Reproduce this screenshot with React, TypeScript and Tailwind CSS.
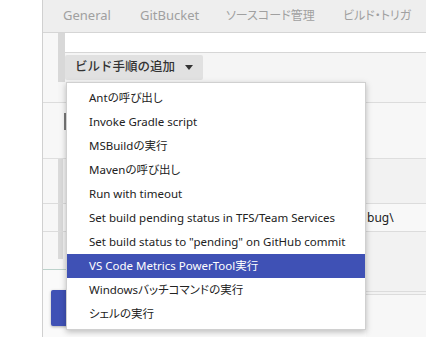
const menuItems = [
  "Antの呼び出し",
  "Invoke Gradle script",
  "MSBuildの実行",
  "Mavenの呼び出し",
  "Run with timeout",
  "Set build pending status in TFS/Team Services",
  'Set build status to "pending" on GitHub commit',
  "VS Code Metrics PowerTool実行",
  "Windowsバッチコマンドの実行",
  "シェルの実行",
];

const activeIndex = 7;

export default function App() {
  return (
    <div
      className="relative flex w-[426px] h-[337px] overflow-hidden bg-white"
      style={{ fontFamily: '"Noto Sans", "Noto Sans CJK JP", sans-serif' }}
    >
      <div className="w-[43px] shrink-0 bg-white border-r border-[#d0d0d0]" />

      <div className="flex flex-col flex-1 min-w-0">
        {/* tabs */}
        <div className="flex items-center h-[33px] shrink-0 pl-[20px] bg-[#eeeeee] border-b border-[#d5d5d5] text-[13px] text-[#a0a0a0] whitespace-nowrap [font-feature-settings:'palt']">
          <span className="w-[77px]">General</span>
          <span className="w-[86px]">GitBucket</span>
          <span className="w-[117px] text-[12px]">ソースコード管理</span>
          <span className="text-[12px]">ビルド・トリガ</span>
        </div>

        <div className="flex h-[20px] shrink-0">
          <div className="w-[15px] bg-[#f7f7f7]" />
          <div className="w-[7px] bg-[#d8d8d8]" />
          <div className="flex-1 bg-white border-b border-[#d6d6d6]" />
        </div>

        <div className="flex h-[50px] shrink-0 border-b border-[#dcdcdc]">
          <div className="w-[15px] bg-[#f7f7f7]" />
          <div className="w-[7px] bg-[#f5f5f5]">
            <div className="h-[29px] bg-[#d8d8d8]" />
          </div>
          <div className="flex-1 bg-[#f5f5f5] pt-[2px]">
            <button className="flex items-center gap-[10px] h-[25px] pl-[10px] pr-[10px] rounded-[2px] bg-[#e1e1e1] text-[12.5px] font-medium text-[#333333]">
              ビルド手順の追加
              <svg width="8" height="5" viewBox="0 0 8 5">
                <path d="M0 0h8L4 5z" fill="#333333" />
              </svg>
            </button>
          </div>
        </div>

        <div className="flex h-[56px] shrink-0 bg-[#f7f7f7] border-b border-[#dedede]">
          <div className="w-[21px]" />
          <div className="mt-[10px] w-[2px] h-[17px] bg-[#7a7a7a]" />
        </div>

        <div className="flex h-[45px] shrink-0 border-b border-[#dcdcdc]">
          <div className="w-[15px] bg-[#f7f7f7]" />
          <div className="w-[5px] bg-[#dadada]" />
          <div className="flex-1 bg-[#f2f2f2]" />
        </div>

        <div className="flex h-[28px] shrink-0 border-b border-[#dcdcdc]">
          <div className="w-[15px] bg-[#f7f7f7]" />
          <div className="w-[5px] bg-[#dadada]" />
          <div className="w-[304px] bg-[#f8f8f8]" />
          <div className="flex flex-1 items-center bg-[#f8f8f8] text-[12px] text-[#222222]">
            <span>bug\</span>
          </div>
        </div>

        <div className="flex h-[37px] shrink-0">
          <div className="w-[15px] bg-[#f7f7f7]" />
          <div className="w-[5px] bg-[#f7f7f7]">
            <div className="h-[27px] bg-[#dadada]" />
          </div>
          <div className="flex-1 bg-[#f2f2f2]" />
        </div>

        {/* footer */}
        <div className="flex flex-1">
          <div className="w-[323px] border-t border-[#bcd2cb] bg-[#fafafa] pl-[8px] pt-[20px]">
            <button className="w-[80px] h-[36px] rounded-[2px] bg-[#3f51b5] shadow-[0_1px_3px_rgba(0,0,0,0.3)]" />
          </div>
          <div className="flex flex-col flex-1">
            <div className="h-[23px] bg-[#f2f2f2] border-b border-[#dcdcdc]" />
            <div className="h-[3px] bg-[#f2f2f2] border-b border-[#dcdcdc]" />
            <div className="flex-1 bg-[#f7f7f7]" />
          </div>
        </div>
      </div>

      {/* dropdown menu */}
      <div className="absolute left-[66px] top-[82px] w-[300px] py-[3px] bg-white border border-[#d0d0d0] shadow-[0_2px_6px_rgba(0,0,0,0.25)] [font-feature-settings:'palt']">
        {menuItems.map((item, i) => (
          <div
            key={item}
            className={
              i === activeIndex
                ? "flex items-center h-[24px] pl-[22px] text-[11.5px] whitespace-nowrap bg-[#3f51b5] text-white"
                : "flex items-center h-[24px] pl-[22px] text-[11.5px] whitespace-nowrap text-[#222222]"
            }
          >
            {item}
          </div>
        ))}
      </div>
    </div>
  );
}
